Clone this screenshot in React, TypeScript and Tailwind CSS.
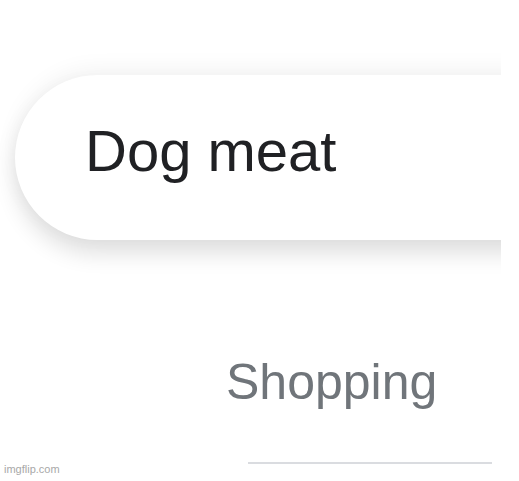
export default function App() {
  return (
    <div className="relative h-[481px] w-[519px] overflow-hidden bg-white font-['Liberation_Sans',Arial,sans-serif]">
      {/* Search box, clipped on the right */}
      <div className="w-[501px] overflow-hidden pl-[15px] pt-[75px] pb-[40px]">
        <div className="h-[165px] w-[600px] rounded-l-full bg-white pl-[70px] pt-[47px] shadow-[0_14px_22px_rgba(0,0,0,0.12),0_-6px_22px_rgba(0,0,0,0.05)]">
          <span className="block text-[58px] leading-[58px] text-[#202124]">Dog meat</span>
        </div>
      </div>

      {/* Tab */}
      <div className="ml-[226px] mt-[77px] text-[50px] leading-[50px] text-[#70757a]">Shopping</div>
      <div className="ml-[248px] mt-[55px] h-[2px] w-[244px] bg-[#dadce0]" />

      <span className="absolute bottom-[4px] left-[4px] text-[11px] text-[#a8a8a8]">imgflip.com</span>
    </div>
  )
}
